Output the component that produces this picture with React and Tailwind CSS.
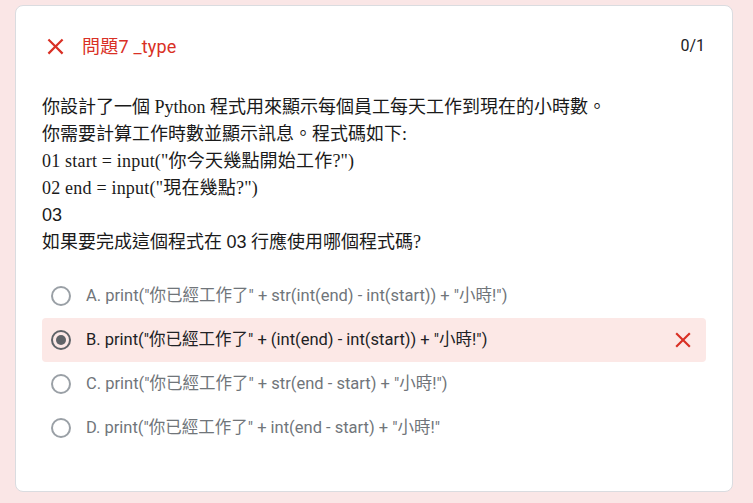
import React from "react";

const XIcon = ({ className = "" }) => (
  <svg viewBox="0 0 24 24" className={className} fill="currentColor">
    <path d="M19 6.41L17.59 5 12 10.59 6.41 5 5 6.41 10.59 12 5 17.59 6.41 19 12 13.41 17.59 19 19 17.59 13.41 12z" />
  </svg>
);

const Radio = ({ checked }) => (
  <div
    className={
      "w-[20px] h-[20px] rounded-full border-2 flex items-center justify-center shrink-0 " +
      (checked ? "border-[#5f6368]" : "border-[#9aa0a6]")
    }
  >
    {checked && <div className="w-[10px] h-[10px] rounded-full bg-[#5f6368]" />}
  </div>
);

const options = [
  { t: 'A. print("你已經工作了" + str(int(end) - int(start)) + "小時!")' },
  { t: 'B. print("你已經工作了" + (int(end) - int(start)) + "小時!")', sel: true },
  { t: 'C. print("你已經工作了" + str(end - start) + "小時!")' },
  { t: 'D. print("你已經工作了" + int(end - start) + "小時!"' },
];

export default function App() {
  const roboto = { fontFamily: 'Roboto, "Noto Sans CJK TC", sans-serif' };
  return (
    <div className="w-[753px] h-[503px] bg-[#fae6e6] pt-[5px] pl-[15px] overflow-hidden">
      <div
        className="w-[718px] h-[487px] bg-white rounded-[8px] border border-[#dadce0] px-[26px]"
        style={roboto}
      >
        <div className="flex items-center justify-between h-[81px] pb-[1px]">
          <div className="flex items-center">
            <XIcon className="w-[27px] h-[27px] text-[#d93025]" />
            <span className="ml-[13px] text-[18px] tracking-[0.2px] text-[#d93025]">問題7 _type</span>
          </div>
          <span className="text-[16px] text-[#202124] mr-[1px]">0/1</span>
        </div>
        <div
          className="text-[18px] leading-[27px] text-[#1a1a1a] mt-[7px]"
          style={{ fontFamily: '"Liberation Serif", "Noto Sans CJK TC", serif' }}
        >
          <div>你設計了一個 Python 程式用來顯示每個員工每天工作到現在的小時數。</div>
          <div>你需要計算工作時數並顯示訊息。程式碼如下:</div>
          <div className="tracking-[0.2px]">01 start = input("你今天幾點開始工作?")</div>
          <div className="tracking-[0.2px]">02 end = input("現在幾點?")</div>
          <div style={{ fontFamily: '"Liberation Sans", sans-serif' }}>03</div>
          <div>
            如果要完成這個程式在 <span style={{ fontFamily: '"Liberation Sans", sans-serif' }}>03</span> 行應使用哪個程式碼?
          </div>
        </div>
        <div className="mt-[18px] flex flex-col">
          {options.map((o, i) => (
            <div
              key={i}
              className={
                "h-[44px] flex items-center pl-[9px] pr-[10px] rounded-[4px] " +
                (o.sel ? "bg-[#fce8e6]" : "")
              }
            >
              <Radio checked={o.sel} />
              <span
                className={
                  "ml-[15px] text-[16.5px] flex-1 " + (o.sel ? "text-[#202124]" : "text-[#70757a]")
                }
              >
                {o.t}
              </span>
              {o.sel && <XIcon className="w-[26px] h-[26px] text-[#d93025]" />}
            </div>
          ))}
        </div>
      </div>
    </div>
  );
}
